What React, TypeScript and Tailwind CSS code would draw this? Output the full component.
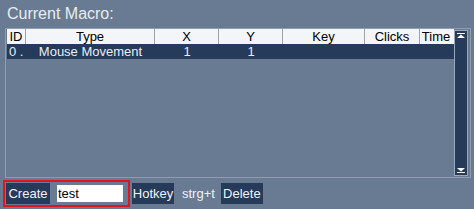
import React from "react";

const cols = [
  { label: "ID", w: "w-[19px]" },
  { label: "Type", w: "w-[129px]" },
  { label: "X", w: "w-[64px]" },
  { label: "Y", w: "w-[64px]" },
  { label: "Key", w: "w-[82px]" },
  { label: "Clicks", w: "w-[55px]" },
  { label: "Time", w: "w-[32px]" },
];

export default function App() {
  return (
    <div
      className="w-[474px] h-[209px] bg-[#687b92] text-[#eef1f5] flex flex-col overflow-hidden"
      style={{ fontFamily: '"Liberation Sans", Arial, sans-serif' }}
    >
      {/* title */}
      <div className="h-[28px] pl-[7px] pt-[5px] text-[16px] leading-[18px] text-[#e8ecf1]">
        Current Macro:
      </div>

      {/* list box */}
      <div className="ml-[5px] w-[466px] h-[150px] border border-[#8e9db0] flex">
        <div className="flex-1 flex flex-col pl-[1px]">
          {/* header */}
          <div className="flex h-[15px] bg-[#f3f5f8] text-black text-[13px] leading-[15px]">
            {cols.map((c, i) => (
              <div
                key={c.label}
                className={`${c.w} text-center ${i < cols.length - 1 ? "border-r border-[#9aa3ad]" : ""}`}
              >
                {c.label}
              </div>
            ))}
          </div>
          {/* selected row */}
          <div className="flex h-[15px] bg-[#263a5a] text-[#e8eef6] text-[13px] leading-[15px]">
            <div className="w-[19px] pl-[2px]">0 .</div>
            <div className="w-[129px] text-center">Mouse Movement</div>
            <div className="w-[64px] text-center">1</div>
            <div className="w-[64px] text-center">1</div>
          </div>
        </div>

        {/* scrollbar */}
        <div className="w-[14px] my-[1px] mr-[2px] border border-[#9aa8b8] bg-[#263a5a] flex flex-col justify-between items-center py-[2px]">
          <svg width="8" height="6" viewBox="0 0 8 6">
            <rect x="0" y="0" width="8" height="1" fill="#fff" />
            <path d="M0 5 L4 1.5 L8 5 Z" fill="#fff" />
          </svg>
          <svg width="8" height="6" viewBox="0 0 8 6">
            <path d="M0 1 L4 4.5 L8 1 Z" fill="#fff" />
            <rect x="0" y="5" width="8" height="1" fill="#fff" />
          </svg>
        </div>
      </div>

      {/* controls */}
      <div className="flex items-center mt-[2px] h-[27px] text-[13px]">
        <div className="ml-[3px] w-[127px] h-[27px] border-[2px] border-[#e0161d] flex items-center gap-[7px] pl-[1px]">
          <button className="w-[44px] h-[21px] bg-[#263a5a] text-[#eef2f7] leading-[21px] text-center">
            Create
          </button>
          <div className="w-[66px] h-[17px] bg-white text-black leading-[17px] pl-[1px]">test</div>
        </div>
        <button className="ml-[2px] w-[42px] h-[21px] bg-[#263a5a] text-[#eef2f7] leading-[21px] text-center">
          Hotkey
        </button>
        <span className="ml-[8px] text-[#eef2f7]">strg+t</span>
        <button className="ml-[6px] w-[42px] h-[21px] bg-[#263a5a] text-[#eef2f7] leading-[21px] text-center">
          Delete
        </button>
      </div>
    </div>
  );
}
